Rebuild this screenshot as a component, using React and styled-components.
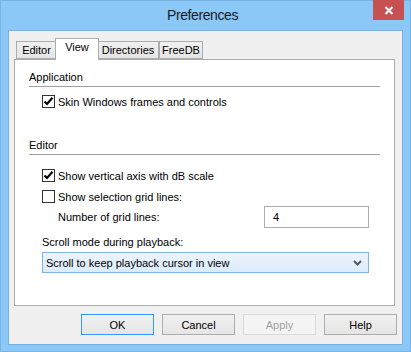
import React from "react";
import styled, { createGlobalStyle } from "styled-components";

const GlobalStyle = createGlobalStyle`
  html, body {
    margin: 0;
    padding: 0;
    background: #8ac6f7;
  }
  body {
    font-family: "Liberation Sans", Arial, sans-serif;
    font-size: 11px;
    color: #000;
  }
`;

const Window = styled.div`
  width: 411px;
  height: 352px;
  box-sizing: border-box;
  background: #8bc7f7;
  border: 1px solid #78b2e6;
  display: flex;
  flex-direction: column;
`;

const TitleBar = styled.div`
  height: 29px;
  display: grid;
  grid-template-columns: 1fr auto 1fr;
  padding-right: 6px;
`;

const Title = styled.div`
  grid-column: 2;
  font-size: 14px;
  letter-spacing: -0.4px;
  line-height: 29px;
  color: #1a1a1a;
`;

const CloseButton = styled.div`
  grid-column: 3;
  justify-self: end;
  width: 31px;
  height: 20px;
  margin-top: -1px;
  background: #c75050;
  display: flex;
  align-items: center;
  justify-content: center;
`;

const Client = styled.div`
  width: 395px;
  height: 315px;
  margin-left: 7px;
  box-sizing: border-box;
  background: #f0f0f0;
  border: 1px solid #79b0e2;
  padding: 7px 7px 0 5px;
  display: flex;
  flex-direction: column;
`;

const TabBar = styled.div`
  display: flex;
  align-items: flex-end;
  height: 21px;
  margin-left: 2px;
  position: relative;
  z-index: 1;
`;

const Tab = styled.div`
  box-sizing: border-box;
  width: ${(p) => p.$w}px;
  height: ${(p) => (p.$active ? "22px" : "18px")};
  margin: ${(p) => (p.$active ? "0 -2px -1px -2px" : "0")};
  padding-bottom: ${(p) => (p.$active ? "4px" : "0")};
  border: 1px solid #acacac;
  border-bottom: ${(p) => (p.$active ? "none" : "1px solid #acacac")};
  background: ${(p) =>
    p.$active ? "#fff" : "linear-gradient(#f0f0f0, #e5e5e5)"};
  line-height: 16px;
  text-align: center;
  position: relative;
  z-index: ${(p) => (p.$active ? 2 : 0)};
`;

const Panel = styled.div`
  box-sizing: border-box;
  width: 381px;
  height: 247px;
  background: #fff;
  border: 1px solid #acacac;
  padding: 10px 14px 0 14px;
`;

const GroupTitle = styled.div`
  line-height: 15px;
  padding-bottom: 1px;
  border-bottom: 1px solid #a0a0a0;
  margin-top: ${(p) => p.$top || 0}px;
`;

const Row = styled.div`
  display: flex;
  align-items: center;
  height: 15px;
  margin-left: 13px;
  margin-top: ${(p) => p.$top || 0}px;
`;

const Box = styled.span`
  box-sizing: border-box;
  width: 13px;
  height: 13px;
  border: 1px solid #333;
  background: #fff;
  margin-right: 3px;
  display: flex;
  align-items: center;
  justify-content: center;
`;

const Check = ({ checked, children, top }) => (
  <Row $top={top}>
    <Box>
      {checked && (
        <svg width="11" height="11" viewBox="0 0 11 11">
          <path
            d="M1.5 5.5 L4 8 L9.5 1.8"
            fill="none"
            stroke="#000"
            strokeWidth="2.2"
          />
        </svg>
      )}
    </Box>
    <span>{children}</span>
  </Row>
);

const FieldRow = styled.div`
  display: flex;
  align-items: center;
  justify-content: space-between;
  margin: 2px 0 0 13px;
  width: 327px;
`;

const FieldLabel = styled.span`
  margin-left: 16px;
`;

const TextBox = styled.div`
  box-sizing: border-box;
  width: 105px;
  height: 22px;
  border: 1px solid #abadb3;
  background: #fff;
  padding-left: 8px;
  line-height: 20px;
`;

const Label = styled.div`
  margin: 7px 0 0 13px;
  line-height: 15px;
`;

const Select = styled.div`
  box-sizing: border-box;
  width: 327px;
  height: 21px;
  margin: 2px 0 0 13px;
  border: 1px solid #7eb4ea;
  background: linear-gradient(#ecf4fc, #dcecfc);
  display: flex;
  align-items: center;
  justify-content: space-between;
  padding: 0 6px 0 3px;
`;

const Buttons = styled.div`
  display: flex;
  justify-content: flex-end;
  gap: 8px;
  margin-top: 8px;
  margin-right: -2px;
`;

const Button = styled.div`
  box-sizing: border-box;
  width: 73px;
  height: 21px;
  border: 1px solid ${(p) =>
    p.$default ? "#3399ff" : p.$disabled ? "#d9d9d9" : "#adadad"};
  background: ${(p) =>
    p.$disabled ? "#f4f4f4" : "linear-gradient(#f0f0f0, #e5e5e5)"};
  color: ${(p) => (p.$disabled ? "#a0a0a0" : "#000")};
  display: flex;
  align-items: center;
  justify-content: center;
`;

export default function App() {
  return (
    <>
      <GlobalStyle />
      <Window>
        <TitleBar>
          <Title>Preferences</Title>
          <CloseButton>
            <svg width="10" height="9" viewBox="0 0 10 9">
              <path d="M1.5 1 L8.5 8 M8.5 1 L1.5 8" stroke="#fff" strokeWidth="2" />
            </svg>
          </CloseButton>
        </TitleBar>
        <Client>
          <TabBar>
            <Tab $w={41}>Editor</Tab>
            <Tab $w={44} $active>View</Tab>
            <Tab $w={62}>Directories</Tab>
            <Tab $w={44}>FreeDB</Tab>
          </TabBar>
          <Panel>
            <GroupTitle>Application</GroupTitle>
            <Check checked top={7}>
              Skin Windows frames and controls
            </Check>
            <GroupTitle $top={29}>Editor</GroupTitle>
            <Check checked top={13}>
              Show vertical axis with dB scale
            </Check>
            <Check top={6}>Show selection grid lines:</Check>
            <FieldRow>
              <FieldLabel>Number of grid lines:</FieldLabel>
              <TextBox>4</TextBox>
            </FieldRow>
            <Label>Scroll mode during playback:</Label>
            <Select>
              <span>Scroll to keep playback cursor in view</span>
              <svg width="9" height="6" viewBox="0 0 9 6">
                <path d="M1 1 L4.5 4.5 L8 1" fill="none" stroke="#555" strokeWidth="2" />
              </svg>
            </Select>
          </Panel>
          <Buttons>
            <Button $default>OK</Button>
            <Button>Cancel</Button>
            <Button $disabled>Apply</Button>
            <Button>Help</Button>
          </Buttons>
        </Client>
      </Window>
    </>
  );
}
